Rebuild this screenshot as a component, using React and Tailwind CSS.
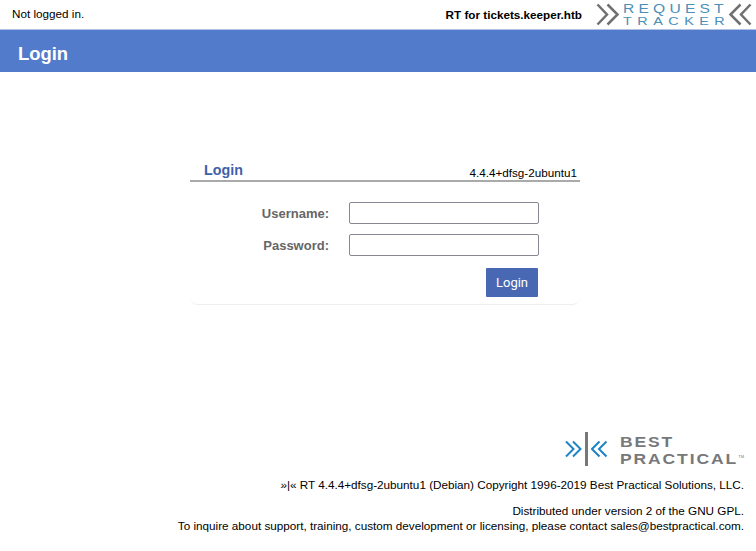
import React from 'react';

const Chevrons = ({ flip, color, width, height, stroke }) => (
    <svg width={width} height={height} viewBox="0 0 24 22" fill="none" stroke={color} strokeWidth={stroke} className={flip ? '-scale-x-100' : ''}>
        <path d="M1.5 1 L11 11 L1.5 21" />
        <path d="M11.5 1 L21.5 11 L11.5 21" />
    </svg>
);

const RtLogo = () => (
    <div className="flex items-center ml-[14px]">
        <Chevrons color="#707070" width={24} height={23} stroke={2.5} />
        <div className="ml-[3px] w-[105px] text-[#4a90b8] leading-[12px] font-normal">
            <div className="text-[12.5px] tracking-[3.35px] whitespace-nowrap origin-left scale-x-125">REQUEST</div>
            <div className="text-[11.5px] tracking-[4.4px] whitespace-nowrap origin-left scale-x-125">TRACKER</div>
        </div>
        <Chevrons flip color="#707070" width={24} height={23} stroke={2.5} />
    </div>
);

const BpLogo = () => (
    <div className="flex items-center justify-end pr-[12px]">
        <svg width={17} height={18} viewBox="0 0 17 18" fill="none" stroke="#1f83c4" strokeWidth="2">
            <path d="M1 1.5 L8.5 9 L1 16.5" />
            <path d="M8 1.5 L15.5 9 L8 16.5" />
        </svg>
        <div className="w-[3px] h-[34px] bg-[#77787b] ml-[3px] mr-[3px]" />
        <svg width={17} height={18} viewBox="0 0 17 18" fill="none" stroke="#1f83c4" strokeWidth="2">
            <path d="M8.5 1.5 L1 9 L8.5 16.5" />
            <path d="M15.5 1.5 L8 9 L15.5 16.5" />
        </svg>
        <div className="ml-[12px] w-[124px] text-[#77787b] text-[14px] leading-[17px] font-bold relative top-[2px]">
            <div className="tracking-[1.5px] origin-left scale-x-125">BEST</div>
            <div className="tracking-[1.5px] whitespace-nowrap origin-left scale-x-125">PRACTICAL</div>
            <span className="absolute right-0 top-[21px] text-[4px] leading-[4px] tracking-normal font-normal">TM</span>
        </div>
    </div>
);

const Field = ({ label, type }) => (
    <div className="flex items-center h-[22px] mb-[10px]">
        <label className="w-[139px] pt-[2px] text-right text-[13px] font-bold text-[#666666]">{label}</label>
        <input type={type} className="ml-[20px] w-[190px] h-[22px] bg-white border border-[#8a8795] rounded-[2px]" />
    </div>
);

export default function App() {
    return (
        <div className="flex flex-col h-[551px] bg-white font-['Liberation_Sans',sans-serif] text-black overflow-hidden">
            {/* top bar */}
            <div className="flex items-center justify-between h-[29px] pl-[12px] pr-[4px]">
                <span className="text-[11.7px] pb-[2px]">Not logged in.</span>
                <div className="flex items-center">
                    <span className="text-[11.7px] font-bold">RT for tickets.keeper.htb</span>
                    <RtLogo />
                </div>
            </div>
            <div className="h-[43px] bg-[#527bcc] border-t border-[#b3c2e3] pl-[18px] pt-[12px]">
                <h1 className="text-[18.4px] leading-[24px] font-bold text-white">Login</h1>
            </div>

            {/* login box */}
            <div className="flex-1">
                <div className="w-[390px] ml-[190px] mt-[88px]">
                    <div className="flex items-end justify-between h-[22px] border-b-2 border-[#aaaaaa] pl-[14px] pr-[3px]">
                        <span className="text-[14.3px] leading-[20px] font-bold text-[#3f5fa8]">Login</span>
                        <span className="text-[11.7px] leading-[15px]">4.4.4+dfsg-2ubuntu1</span>
                    </div>
                    <div className="pt-[20px] pb-[7px] border-b border-[#eeeeee] rounded-b-[8px]">
                        <Field label="Username:" type="text" />
                        <Field label="Password:" type="password" />
                        <div className="flex justify-end pr-[42px] pt-[2px]">
                            <button className="w-[52px] h-[29px] bg-[#4868b3] rounded-[1px] text-white text-[13px] font-['Roboto',sans-serif]">Login</button>
                        </div>
                    </div>
                </div>
            </div>

            {/* footer */}
            <div className="pb-[18px]">
                <BpLogo />
                <div className="pr-[12px] text-right text-[11.71px] leading-[15px]">
                    <p className="mt-[11px]">»|« RT 4.4.4+dfsg-2ubuntu1 (Debian) Copyright 1996-2019 Best Practical Solutions, LLC.</p>
                    <p className="mt-[11px]">Distributed under version 2 of the GNU GPL.</p>
                    <p>To inquire about support, training, custom development or licensing, please contact sales@bestpractical.com.</p>
                </div>
            </div>
        </div>
    );
}
